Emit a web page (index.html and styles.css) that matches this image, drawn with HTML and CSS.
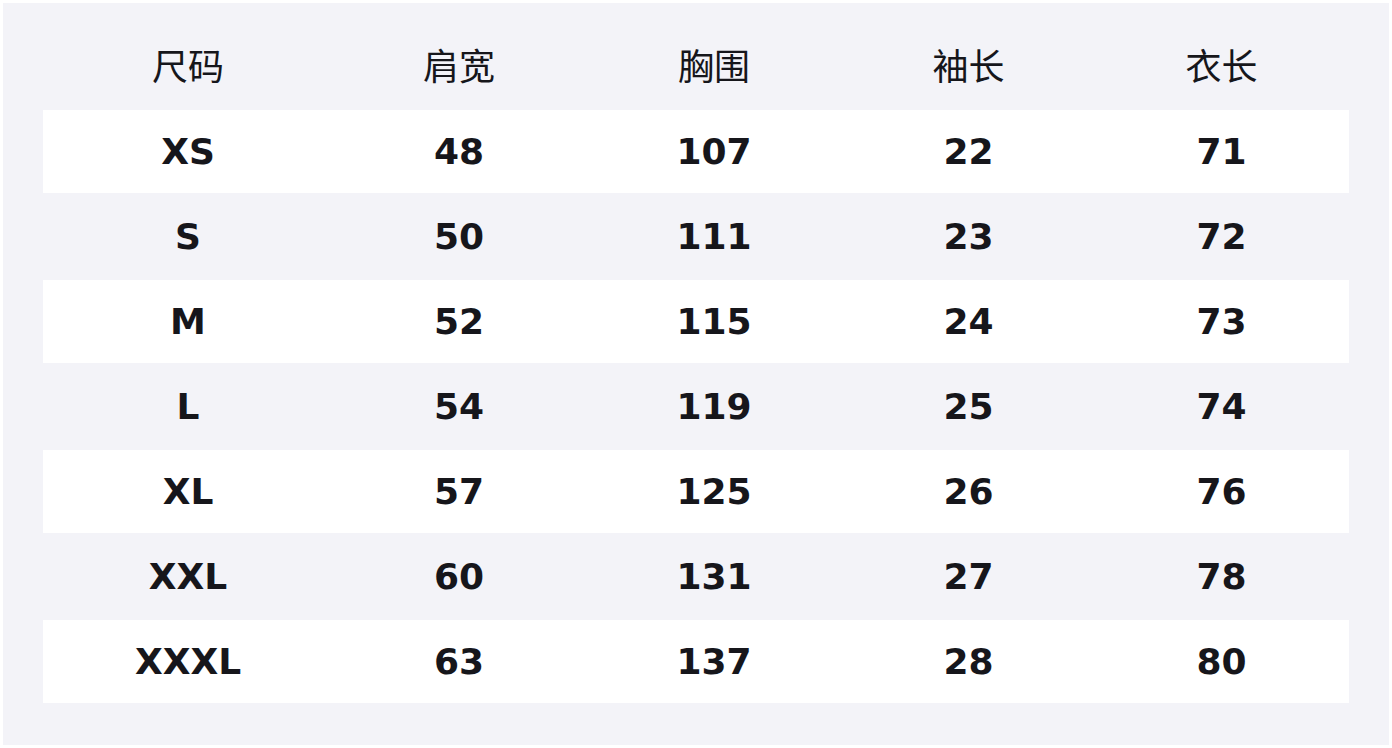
FILE: index.html
```html
<!DOCTYPE html>
<html lang="zh">
<head>
<meta charset="utf-8">
<title>尺码表</title>
<link rel="stylesheet" href="styles.css">
</head>
<body>
<div class="panel">
  <div class="table">
    <div class="row head"><div>尺码</div><div>肩宽</div><div>胸围</div><div>袖长</div><div>衣长</div></div>
    <div class="row odd"><div>XS</div><div>48</div><div>107</div><div>22</div><div>71</div></div>
    <div class="row"><div>S</div><div>50</div><div>111</div><div>23</div><div>72</div></div>
    <div class="row odd"><div>M</div><div>52</div><div>115</div><div>24</div><div>73</div></div>
    <div class="row"><div>L</div><div>54</div><div>119</div><div>25</div><div>74</div></div>
    <div class="row odd"><div>XL</div><div>57</div><div>125</div><div>26</div><div>76</div></div>
    <div class="row"><div>XXL</div><div>60</div><div>131</div><div>27</div><div>78</div></div>
    <div class="row odd"><div>XXXL</div><div>63</div><div>137</div><div>28</div><div>80</div></div>
  </div>
</div>
</body>
</html>
```
FILE: styles.css
```css
html, body {
  margin: 0;
  padding: 0;
  background: #ffffff;
}
body {
  padding: 3px;
}
.panel {
  background: #f3f3f8;
  height: 742px;
  box-sizing: border-box;
  padding: 22px 40px 42px 40px;
}
.table {
  display: flex;
  flex-direction: column;
  gap: 2px;
}
.row {
  display: grid;
  grid-template-columns: 290px 252px 258px 251px 255px;
  height: 83px;
  align-items: center;
  text-align: center;
  color: #16161b;
  font-family: "DejaVu Sans", "Noto Sans CJK SC", sans-serif;
  font-weight: bold;
  font-size: 36px;
  line-height: 1;
}
.row.odd {
  background: #ffffff;
}
.row.head {
  font-family: "Noto Sans CJK SC", sans-serif;
  font-weight: normal;
  font-size: 36px;
}
.row.head > div {
  padding-bottom: 6px;
}
```
